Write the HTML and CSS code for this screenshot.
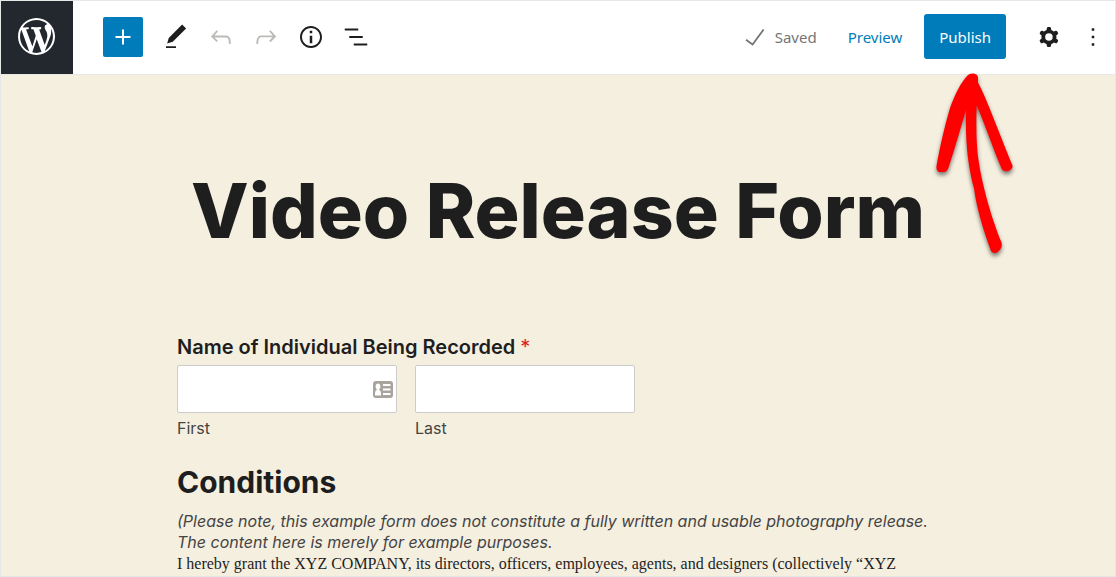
FILE: index.html
```html
<!DOCTYPE html>
<html lang="en">
<head>
<meta charset="utf-8">
<meta name="viewport" content="width=device-width, initial-scale=1">
<title>Video Release Form</title>
<link rel="stylesheet" href="styles.css">
</head>
<body>
<div class="editor">
  <header class="toolbar">
    <a class="site-link" href="#" aria-label="View posts">
      <svg class="site-logo" viewBox="0 0 20 20"><path d="M20 10c0-5.51-4.49-10-10-10C4.48 0 0 4.49 0 10c0 5.52 4.48 10 10 10 5.51 0 10-4.48 10-10zM7.78 15.37L4.37 6.22c.55-.02 1.17-.08 1.17-.08.5-.06.44-1.13-.06-1.11 0 0-1.45.11-2.37.11-.18 0-.37 0-.58-.01C4.12 2.69 6.87 1.11 10 1.11c2.33 0 4.45.87 6.05 2.34-.68-.11-1.65.39-1.65 1.58 0 .74.45 1.36.9 2.1.35.61.55 1.36.55 2.46 0 1.49-1.4 5-1.4 5l-3.03-8.37c.54-.02.82-.17.82-.17.5-.05.44-1.25-.06-1.22 0 0-1.44.12-2.38.12-.87 0-2.33-.12-2.33-.12-.5-.03-.56 1.2-.06 1.22l.92.08 1.26 3.41zM17.41 10c.24-.64.74-1.87.43-4.25.7 1.29 1.05 2.71 1.05 4.25 0 3.29-1.73 6.24-4.4 7.78.97-2.59 1.94-5.2 2.92-7.78zM6.1 18.09C3.12 16.65 1.11 13.53 1.11 10c0-1.3.23-2.48.72-3.59C3.25 10.3 4.67 14.2 6.1 18.09zm4.03-6.63l2.58 6.98c-.86.29-1.76.45-2.71.45-.79 0-1.57-.11-2.29-.33.81-2.38 1.62-4.74 2.42-7.1z"/></svg>
    </a>
    <div class="tools">
      <button class="add-button" type="button" aria-label="Add block"><svg class="icon" viewBox="0 0 24 24"><path d="M18 11.2h-5.2V6h-1.6v5.2H6v1.6h5.2V18h1.6v-5.2H18z"/></svg></button>
      <button class="icon-button" type="button" aria-label="Edit"><svg class="icon" viewBox="0 0 24 24"><path d="M20.1 5.1L16.9 2 6.2 12.7l-1.3 4.4 4.5-1.3L20.1 5.1zM4 20.8h8v-1.5H4v1.5z"/></svg></button>
      <button class="icon-button is-muted" type="button" aria-label="Undo"><svg class="icon" viewBox="0 0 24 24"><path d="M18.3 11.7c-.6-.6-1.4-.9-2.3-.9H6.7l2.9-3.3-1.1-1-4.5 5L8.5 16l1-1-2.7-2.7H16c.5 0 .9.2 1.3.5 1 1 1 3.4 1 4.5v.3h1.5v-.2c0-1.5 0-4.3-1.5-5.7z"/></svg></button>
      <button class="icon-button is-muted" type="button" aria-label="Redo"><svg class="icon" viewBox="0 0 24 24"><path d="M15.6 6.5l-1.1 1 2.9 3.3H8c-.9 0-1.7.3-2.3.9-1.4 1.5-1.4 4.2-1.4 5.6v.2h1.5v-.3c0-1.1 0-3.5 1-4.5.3-.3.7-.5 1.3-.5h9.2L14.5 15l1.1 1.1 4.6-4.6-4.6-5z"/></svg></button>
      <button class="icon-button" type="button" aria-label="Details"><svg class="icon" viewBox="0 0 24 24"><path fill-rule="evenodd" d="M12 3.2c-4.8 0-8.8 3.9-8.8 8.8 0 4.8 3.9 8.8 8.8 8.8 4.8 0 8.8-3.9 8.8-8.8 0-4.8-4-8.8-8.8-8.8zm0 16c-4 0-7.2-3.3-7.2-7.2C4.8 8 8 4.8 12 4.8s7.2 3.3 7.2 7.2c0 4-3.2 7.2-7.2 7.2zM11 17h2v-6h-2v6zm0-8h2V7h-2v2z"/></svg></button>
      <button class="icon-button" type="button" aria-label="List view"><svg class="icon" viewBox="0 0 24 24"><path d="M13.8 5.2H3v1.5h10.8V5.2zm-3.6 12v1.5H21v-1.5H10.2zm7.2-6H6.6v1.5h10.8v-1.5z"/></svg></button>
    </div>
    <div class="actions">
      <span class="saved"><svg class="icon" viewBox="0 0 24 24"><path d="M18.3 5.6L9.9 16.9l-4.6-3.4-.9 1.2 5.8 4.3 9.3-12.6z"/></svg>Saved</span>
      <a class="preview" href="#">Preview</a>
      <div class="publish-wrap">
        <button class="publish" type="button">Publish</button>
        <svg class="pointer" viewBox="930 70 90 190" aria-hidden="true"><path d="M968 75Q970 73.600 973.500 73.600Q977.500 74 978 77.500L978 82.500C986 97 998 130 1012.500 165.500Q1013 169 1008.500 171Q1004 172 1002 169.500C993 149 985 124 976.700 105.500C976 122 976.300 146 978.500 160C981 178 989 212 1001.700 243Q1002.500 249 997 252.500Q993 254 991 251C983 229 976 206 974 188L972.800 184C969 168 965 146 966 110C960 130 955 148 949 166Q948 171 944.500 172H939Q936 171 936.500 166C939 152 943 132 950 108C955 94 961 82 968 75Z"/></svg>
      </div>
      <div class="more">
        <button class="icon-button" type="button" aria-label="Settings"><svg class="icon" viewBox="0 0 24 24"><path fill-rule="evenodd" d="M10.289 4.836A1 1 0 0111.275 4h1.306a1 1 0 01.987.836l.244 1.466c.787.26 1.503.679 2.108 1.218l1.393-.522a1 1 0 011.216.437l.653 1.13a1 1 0 01-.23 1.273l-1.148.944a6.025 6.025 0 010 2.435l1.149.946a1 1 0 01.23 1.272l-.653 1.13a1 1 0 01-1.216.437l-1.394-.522c-.605.54-1.32.958-2.108 1.218l-.244 1.466a1 1 0 01-.987.836h-1.306a1 1 0 01-.986-.836l-.244-1.466a5.995 5.995 0 01-2.108-1.218l-1.394.522a1 1 0 01-1.217-.436l-.653-1.131a1 1 0 01.23-1.272l1.149-.946a6.026 6.026 0 010-2.435l-1.148-.944a1 1 0 01-.23-1.272l.653-1.131a1 1 0 011.217-.437l1.393.522a5.994 5.994 0 012.108-1.218l.244-1.466zM14.929 12a3 3 0 11-6 0 3 3 0 016 0z"/></svg></button>
        <button class="icon-button" type="button" aria-label="Options"><svg class="icon" viewBox="0 0 24 24"><path d="M13 19h-2v-2h2v2zm0-6h-2v-2h2v2zm0-6h-2V5h2v2z"/></svg></button>
      </div>
    </div>
  </header>
  <main class="canvas">
    <h1 class="title">Video Release Form</h1>
    <form class="form">
      <fieldset class="name-group">
        <legend class="label">Name of Individual Being Recorded <span class="required">*</span></legend>
        <div class="name-row">
          <div class="field">
            <div class="input-wrap">
              <input class="input" id="first" type="text">
              <svg class="contact" viewBox="0 0 20 17" aria-hidden="true"><rect width="20" height="17" rx="3" fill="#a8a39c"/><path fill="#fff" d="M2 14.500V12Q2 9.500 4 8.800Q2.600 7.500 2.600 5.500Q2.800 2.500 5 2.500Q7.300 2.500 7.400 5.500Q7.400 7.500 6 8.800Q8 9.500 8 12V14.500ZM10 3h7.500v2H10zM10 7.500h7.500v2H10zM10 12h7.500v2H10z"/></svg>
            </div>
            <label class="sublabel" for="first">First</label>
          </div>
          <div class="field">
            <input class="input" id="last" type="text">
            <label class="sublabel" for="last">Last</label>
          </div>
        </div>
      </fieldset>
      <h2 class="conditions">Conditions</h2>
      <p class="note">(Please note, this example form does not constitute a fully written and usable photography release. The content here is merely for example purposes.</p>
      <p class="terms">I hereby grant the XYZ COMPANY, its directors, officers, employees, agents, and designers (collectively “XYZ</p>
    </form>
  </main>
</div>
</body>
</html>
```
FILE: styles.css
```css
* {
  box-sizing: border-box;
}

body {
  margin: 0;
  font-family: Inter, "Liberation Sans", sans-serif;
  color: #1e1e1e;
}

.editor {
  display: flex;
  flex-direction: column;
  min-height: 100vh;
  border: 1px solid #e6e8e8;
  background: #f5efe0;
}

.toolbar {
  display: flex;
  flex: none;
  align-items: stretch;
  border-bottom: 1px solid #e8e8e4;
  background: #fff;
  font-family: "Noto Sans", "Open Sans", sans-serif;
  font-size: 15px;
}

.site-link {
  display: flex;
  align-items: center;
  justify-content: center;
  width: 72px;
  height: 73px;
  padding: 0 2px 2px 0;
  background: #23282e;
}

.site-logo {
  width: 37px;
  height: 37px;
  fill: #fff;
}

.tools {
  display: flex;
  align-items: center;
  margin-left: 30px;
  padding-bottom: 2px;
}

.add-button,
.icon-button {
  display: flex;
  align-items: center;
  justify-content: center;
  padding: 0;
  border: 0;
  background: none;
  color: #1e1e1e;
}

.icon-button {
  width: 45px;
  height: 45px;
}

.add-button {
  width: 40px;
  height: 40px;
  margin-right: 10px;
  border-radius: 2px;
  background: #007cba;
  color: #fff;
}

.icon {
  flex: none;
  width: 30px;
  height: 30px;
  fill: currentColor;
}

.icon-button.is-muted {
  color: #bdbbb7;
}

.actions {
  display: flex;
  align-items: center;
  margin-left: auto;
  padding-bottom: 2px;
}

.saved {
  display: flex;
  align-items: center;
  gap: 5px;
  margin-right: 31px;
  color: #757575;
}

.preview {
  margin-right: 22px;
  color: #007cba;
  text-decoration: none;
}

.publish-wrap {
  position: relative;
}

.publish {
  height: 45px;
  padding: 0 15px;
  border: 0;
  border-radius: 3px;
  background: #007cba;
  color: #fff;
  font: inherit;
}

.pointer {
  position: absolute;
  top: 56px;
  left: 6px;
  width: 90px;
  height: 190px;
  overflow: visible;
  fill: #f00;
  filter: drop-shadow(0 3px 2px rgba(0, 0, 0, 0.5));
  pointer-events: none;
}

.more {
  display: flex;
  margin-left: 21px;
}

.more .icon-button {
  width: 44px;
}

.canvas {
  width: 100%;
  max-width: 762px;
  margin: 0 auto;
}

.title {
  margin: 87px 0 69px;
  font-size: 75px;
  font-weight: 800;
  line-height: 98px;
  text-align: center;
}

.name-group {
  min-width: 0;
  margin: 0;
  padding: 0;
  border: 0;
}

.label {
  padding: 0;
  font-size: 20px;
  font-weight: 600;
  line-height: 36px;
}

.required {
  color: #e02020;
  font-weight: 400;
}

.name-row {
  display: flex;
  gap: 18px;
}

.field {
  display: flex;
  flex-direction: column;
  width: 220px;
}

.input-wrap {
  position: relative;
}

.input {
  display: block;
  width: 100%;
  height: 48px;
  padding: 0 12px;
  border: 1px solid #ccc;
  border-radius: 2px;
  background: #fff;
  font: inherit;
}

.contact {
  position: absolute;
  top: 16px;
  right: 4px;
  width: 20px;
  height: 17px;
}

.sublabel {
  margin-top: 3px;
  color: #444;
  font-size: 16px;
  line-height: 24px;
}

.conditions {
  margin: 24px 0 11px;
  font-size: 30px;
  font-weight: 700;
  line-height: 36px;
}

.note {
  margin: 0;
  color: #444;
  font-size: 16px;
  font-style: italic;
  line-height: 21px;
}

.terms {
  margin: 0;
  font-family: "Liberation Serif", serif;
  font-size: 16px;
  line-height: 21px;
}
```
